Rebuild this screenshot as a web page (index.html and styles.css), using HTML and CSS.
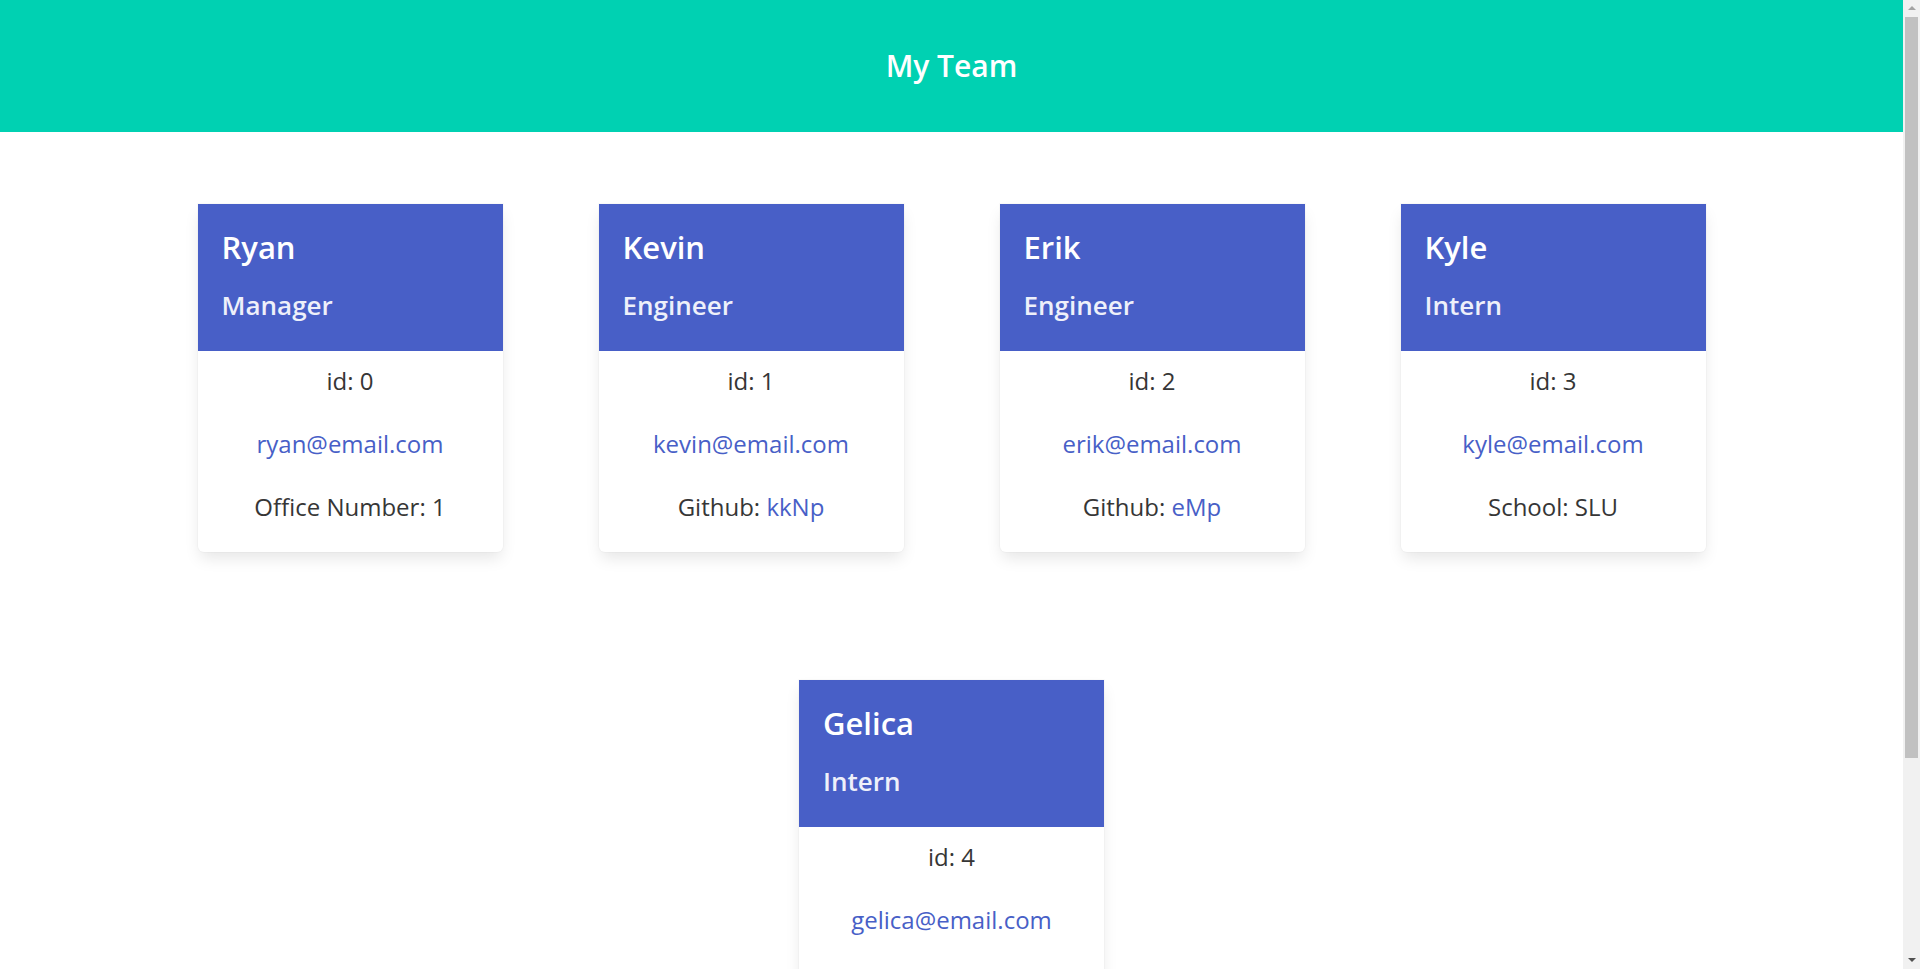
FILE: index.html
```html
<!DOCTYPE html>
<html lang="en">
<head>
<meta charset="utf-8">
<title>My Team</title>
<link rel="stylesheet" href="styles.css">
</head>
<body>
<div class="page">
<header class="hero">
  <h1 class="hero-title">My Team</h1>
</header>
<main class="team">
  <div class="card">
    <div class="card-head">
      <p class="card-name">Ryan</p>
      <p class="card-role">Manager</p>
    </div>
    <div class="card-body">
      <p class="card-line">id: 0</p>
      <p class="card-line"><a class="link" href="#">ryan@email.com</a></p>
      <p class="card-line">Office Number: 1</p>
    </div>
  </div>
  <div class="card">
    <div class="card-head">
      <p class="card-name">Kevin</p>
      <p class="card-role">Engineer</p>
    </div>
    <div class="card-body">
      <p class="card-line">id: 1</p>
      <p class="card-line"><a class="link" href="#">kevin@email.com</a></p>
      <p class="card-line">Github: <a class="link" href="#">kkNp</a></p>
    </div>
  </div>
  <div class="card">
    <div class="card-head">
      <p class="card-name">Erik</p>
      <p class="card-role">Engineer</p>
    </div>
    <div class="card-body">
      <p class="card-line">id: 2</p>
      <p class="card-line"><a class="link" href="#">erik@email.com</a></p>
      <p class="card-line">Github: <a class="link" href="#">eMp</a></p>
    </div>
  </div>
  <div class="card">
    <div class="card-head">
      <p class="card-name">Kyle</p>
      <p class="card-role">Intern</p>
    </div>
    <div class="card-body">
      <p class="card-line">id: 3</p>
      <p class="card-line"><a class="link" href="#">kyle@email.com</a></p>
      <p class="card-line">School: SLU</p>
    </div>
  </div>
  <div class="card">
    <div class="card-head">
      <p class="card-name">Gelica</p>
      <p class="card-role">Intern</p>
    </div>
    <div class="card-body">
      <p class="card-line">id: 4</p>
      <p class="card-line"><a class="link" href="#">gelica@email.com</a></p>
      <p class="card-line">School: SLU</p>
    </div>
  </div>
</main>
</div>
<div class="scrollbar" aria-hidden="true">
  <span class="scroll-up"></span>
  <span class="scroll-thumb"></span>
  <span class="scroll-down"></span>
</div>
</body>
</html>
```
FILE: styles.css
```css
* { box-sizing: border-box; }

html, body {
  margin: 0;
  padding: 0;
  background: #ffffff;
}

body {
  font-family: "Open Sans", "Noto Sans", "Liberation Sans", sans-serif;
  color: #363636;
}

p { margin: 0; }

.page {
  margin-right: 17px;
}

.hero {
  background: #00d1b2;
  padding: 48px 24px;
}

.hero-title {
  margin: 0;
  text-align: center;
  color: #ffffff;
  font-size: 30px;
  font-weight: 600;
  line-height: 36px;
}

.team {
  display: flex;
  flex-wrap: wrap;
  justify-content: center;
  row-gap: 128px;
  padding: 72px 0 194px;
}

.card {
  width: 305px;
  margin: 0 48px;
  background: #ffffff;
  border-radius: 0 0 6px 6px;
  box-shadow: 0 8px 16px -2px rgba(10, 10, 10, 0.1), 0 0 0 1px rgba(10, 10, 10, 0.02);
}

.card-head {
  height: 147px;
  background: #485fc7;
  padding: 25px 24px 0;
  display: flex;
  flex-direction: column;
  gap: 24px;
}

.card-name {
  color: #ffffff;
  font-size: 31px;
  font-weight: 600;
  line-height: 36px;
}

.card-role {
  color: #eef0fa;
  font-size: 26px;
  font-weight: 600;
  line-height: 32px;
}

.card-body {
  padding: 12px 16px 27px;
  display: flex;
  flex-direction: column;
  gap: 27px;
  text-align: center;
}

.card-line {
  font-size: 24px;
  line-height: 36px;
}

.link {
  color: #485fc7;
  text-decoration: none;
}

/* classic scrollbar overlay */
.scrollbar {
  position: fixed;
  top: 0;
  right: 0;
  width: 17px;
  height: 100vh;
  background: #f1f1f1;
}

.scroll-thumb {
  position: absolute;
  top: 17px;
  left: 2px;
  width: 13px;
  height: 741px;
  background: #c1c1c1;
}

.scroll-up,
.scroll-down {
  position: absolute;
  left: 5px;
  width: 0;
  height: 0;
  border-left: 4px solid transparent;
  border-right: 4px solid transparent;
}

.scroll-up {
  top: 6px;
  border-bottom: 4px solid #a3a3a3;
}

.scroll-down {
  bottom: 7px;
  border-top: 4px solid #505050;
}
```
